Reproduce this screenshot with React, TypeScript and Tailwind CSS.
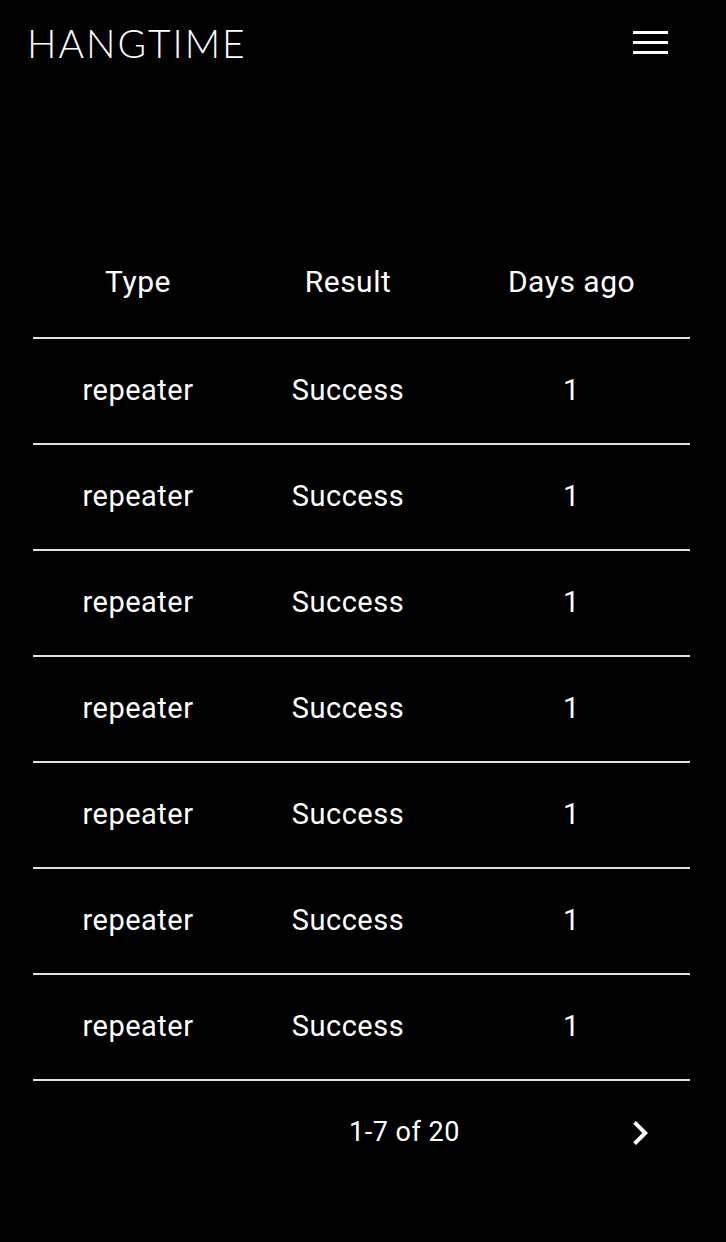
import React from 'react';

const rows = Array.from({ length: 7 }, () => ({ type: 'repeater', result: 'Success', days: 1 }));

const cell = 'flex items-center justify-center';

export default function App() {
  return (
    <div className="min-h-[1242px] w-full bg-black text-white" style={{ fontFamily: 'Roboto, "Liberation Sans", sans-serif' }}>
      <header className="flex h-[86px] items-center justify-between pl-[27px] pr-[58px]">
        <h1
          className="text-[39px] font-light leading-none tracking-[2px]"
          style={{ fontFamily: 'Lato, "Open Sans", sans-serif', fontWeight: 300 }}
        >
          HANGTIME
        </h1>
        <button aria-label="Menu" className="-mt-[2px] flex w-[35px] flex-col gap-[7px]">
          <span className="h-[3px] w-full bg-white" />
          <span className="h-[3px] w-full bg-white" />
          <span className="h-[3px] w-full bg-white" />
        </button>
      </header>

      <div className="mx-[33px] mt-[147px] w-[657px] tracking-[0.5px]">
        <div className="grid h-[106px] grid-cols-[210px_210px_237px] border-b-2 border-[#e0e0e0] pb-[8px] text-[30px]">
          <div className={cell}>Type</div>
          <div className={cell}>Result</div>
          <div className={cell}>Days ago</div>
        </div>
        {rows.map((r, i) => (
          <div key={i} className="grid h-[106px] grid-cols-[210px_210px_237px] border-b-2 border-[#e0e0e0] text-[29px]">
            <div className={cell}>{r.type}</div>
            <div className={cell}>{r.result}</div>
            <div className={cell}>{r.days}</div>
          </div>
        ))}
        <div className="flex h-[103px] items-center text-[27px]">
          <span className="ml-[316px]">1-7 of 20</span>
          <svg className="ml-[156px] h-[48px] w-[48px]" viewBox="0 0 24 24" fill="currentColor">
            <path d="M10 6L8.59 7.41 13.17 12l-4.58 4.59L10 18l6-6z" />
          </svg>
        </div>
      </div>
    </div>
  );
}
